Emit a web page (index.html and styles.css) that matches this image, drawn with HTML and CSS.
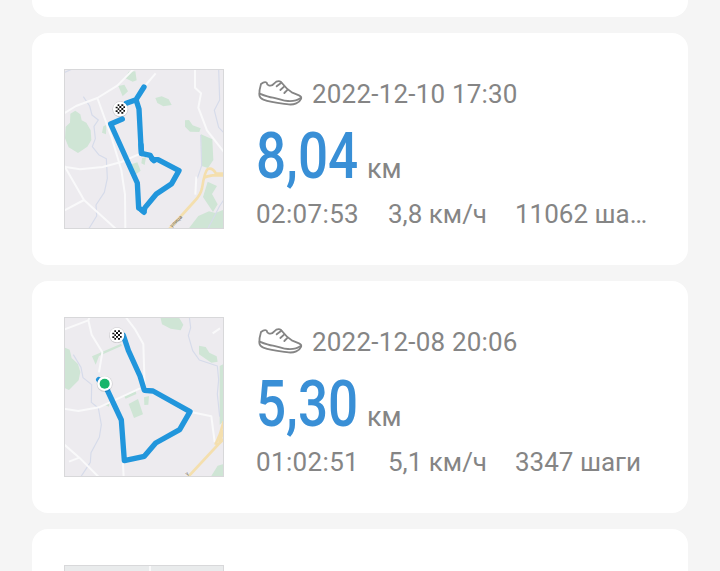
FILE: index.html
```html
<!DOCTYPE html>
<html lang="ru">
<head>
    <meta charset="UTF-8">
    <meta name="viewport" content="width=device-width, initial-scale=1.0">
    <title>Тренировки</title>
    <link rel="stylesheet" href="styles.css">
</head>
<body>
    <svg width="0" height="0" class="defs">
        <symbol id="shoe" viewBox="0 0 150 105">
            <path d="M18 24 C15 34 12 45 13 57 Q14 67 25 71 C49 80 78 82 101 85 C116 87 134 80 138 69 Q141 62 132 58 L112 50 C99 42 88 31 78 18 Q72 13 64 17 L57 23 Q51 31 41 28 Q36 27 35 20 Q29 15 18 24 Z"/>
            <path d="M14 53 C31 60 42 64 54 65 C73 68 83 75 99 75 C114 76 127 73 137 66"/>
            <path d="M79 20 L65 31 M88 31 L76 42 M98 41 L88 51"/>
        </symbol>
        <symbol id="flag" viewBox="-25 -25 50 50">
            <circle r="24" fill="#000" opacity=".13" cy="1"/>
            <circle r="22" fill="#fff"/>
            <path fill="#111" d="M-8-14h5v5h-5z M3-14h6v5h-6z M-3-9h6v6h-6z M9-8h5v5h-5z M-14-7h6v5h-6z M-8-2h5v5h-5z M3-3h6v6h-6z M-3 3h6v5h-6z M9 3h5v5h-5z M-14 4h6v5h-6z M-8 9h5v5h-5z M3 9h6v5h-6z"/>
        </symbol>
    </svg>

    <div class="list">
        <div class="card"></div>

        <div class="card">
            <svg class="map" viewBox="24 27 480 480">
                <g class="park">
                    <path d="M43 161 L58 152 L73 163 L77 181 L91 188 L104 211 L106 240 L94 260 L66 279 L38 262 L27 235 L29 200 L42 188 Z"/>
                    <path d="M218 35 L238 34 L242 61 L230 65 L207 54 Z M187 78 L205 74 L216 94 L200 109 Z"/>
                    <path d="M298 114 L317 109 L338 118 L347 135 L322 139 L304 129 Z"/>
                    <path d="M387 181 L399 180 L410 196 L434 205 L430 216 L402 215 L387 200 Z"/>
                    <path d="M435 223 L469 238 L472 300 L456 324 L437 318 Z M455 365 L483 378 L468 402 L485 433 L471 456 L441 411 Z"/>
                    <path d="M503 449 V507 H397 L427 468 L459 454 L478 459 Z"/>
                    <path d="M226 313 L244 307 L254 332 L236 346 Z M258 295 L270 291 L266 315 L256 310 Z M142 199 L151 195 L150 223 L138 218 Z"/>
                </g>
                <g class="river">
                    <path d="M82 110 L101 138 L108 165 L127 180 L114 199 L118 236 L109 260 L128 284 L151 296 L154 355 L145 397 L120 435 L122 468 L98 507 M434 224 L437 317 L424 355 M488 27 L491 120 L475 151 L488 202 L503 218 M455 507 L491 438 L503 420 M24 38 L49 27"/>
                </g>
                <g class="road">
                    <path d="M24 160 L60 138 L124 114 L184 77 L233 27 M124 114 L166 230 L196 330 L207 404 L208 507 M24 320 L72 328 L140 321 L196 306 L248 283 M24 316 L84 420 L24 452 M84 420 L180 507 M417 27 L417 83 L435 100 L427 143 L453 211 L503 275 M299 40 L264 81 M421 350 L418 404"/>
                </g>
                <g class="highway">
                    <path d="M503 341 H480 Q470 322 455 327 Q446 334 438 385 Q434 405 416 423 L340 507 M503 346 H470 Q452 348 443 354"/>
                </g>
                <text class="road-name" transform="translate(348 503) rotate(-44)">улица</text>
                <path class="track" d="M264 81 L240 119 L211 130 M199 177 L164 192 L244 369 L248 444 L264 454 L267 443 L301 402 L347 371 L369 332 L306 299 L289 298 L283 286 L256 280 L249 147 L240 119"/>
                <path class="track" d="M255 254 L257 281 M288 295 L294 302 M257 451 L264 457"/>
                <use href="#flag" x="168" y="122" width="50" height="50"/>
                <rect class="frame" x="25.5" y="28.5" width="477" height="477"/>
            </svg>
            <div class="info">
                <div class="date"><svg class="shoe"><use href="#shoe"/></svg><span>2022-12-10 17:30</span></div>
                <div class="distance"><span class="num">8,04</span><span class="unit">км</span></div>
                <div class="stats"><span class="time">02:07:53</span><span class="speed">3,8 км/ч</span><span>11062 ша…</span></div>
            </div>
        </div>

        <div class="card">
            <svg class="map" viewBox="24 27 480 480">
                <g class="park">
                    <path d="M24 118 L41 125 L47 150 L66 168 L73 192 L68 217 L39 246 L24 239 Z"/>
                    <path d="M313 27 H368 L382 50 L374 67 L344 62 L318 49 Z M429 113 L449 117 L460 134 L482 145 L485 161 L466 164 L429 139 Z"/>
                    <path d="M218 288 L246 273 L261 319 L234 330 Z M264 268 L279 264 L277 290 L265 291 Z M204 264 L239 249 L241 258 L209 272 Z M146 290 L160 284 L159 296 Z"/>
                    <path d="M108 145 L195 107 L198 113 L129 144 L119 170 Z M491 174 L503 168 V340 L491 350 Z M503 468 V507 H464 L485 473 Z"/>
                </g>
                <g class="river">
                    <path d="M52 140 L75 178 L81 209 L107 230 L106 283 L127 300 L136 350 L130 388 L105 434 L103 463 L74 507 M400 27 L404 59 L397 83 L410 128 L430 156 L484 174 L488 215 L484 258 L491 326"/>
                </g>
                <g class="road">
                    <path d="M24 65 L97 37 L107 80 L139 133 L129 193 M209 27 L238 65 L262 108 L266 236 M24 302 L67 309 L129 298 L252 241 M24 409 L70 449 L39 461 M70 449 L128 507 M200 450 L203 507 M401 311 L466 325 L476 402 M470 76 L492 61 M97 37 L101 27"/>
                </g>
                <g class="highway">
                    <path d="M396 507 L488 408 L503 394 M478 410 L492 378 L503 340 M490 405 L503 366"/>
                </g>
                <text class="road-name" transform="translate(394 503) rotate(-44)">у</text>
                <path class="track" d="M202 82 L217 127 L252 204 L265 247 L291 249 L402 311 L371 365 L299 405 L265 445 L205 458 L196 336 L151 240 L128 215"/>
                <use href="#flag" x="158" y="56" width="50" height="50"/>
                <circle cx="146" cy="228" r="24" fill="#000" opacity=".12"/>
                <circle cx="146" cy="227" r="22" fill="#fff"/>
                <circle cx="146" cy="227" r="15" fill="#18b56b"/>
                <rect class="frame" x="25.5" y="28.5" width="477" height="477"/>
            </svg>
            <div class="info">
                <div class="date"><svg class="shoe"><use href="#shoe"/></svg><span>2022-12-08 20:06</span></div>
                <div class="distance"><span class="num">5,30</span><span class="unit">км</span></div>
                <div class="stats"><span class="time">01:02:51</span><span class="speed">5,1 км/ч</span><span>3347 шаги</span></div>
            </div>
        </div>

        <div class="card">
            <svg class="map map-empty" viewBox="24 27 480 480">
                <path class="road" d="M282 27 V507"/>
                <rect class="frame" x="25.5" y="28.5" width="477" height="477"/>
            </svg>
        </div>
    </div>
</body>
</html>
```

FILE: styles.css
```css
* {
    box-sizing: border-box;
    margin: 0;
    padding: 0;
}

body {
    background: #f5f5f5;
    color: #858585;
    font-family: Roboto, "Liberation Sans", sans-serif;
    font-size: 26px;
    height: 571px;
    overflow: hidden;
}

.defs {
    position: absolute;
}

.list {
    display: flex;
    flex-direction: column;
    gap: 16px;
    height: 786px;
    overflow: hidden;
    padding: 0 32px;
    margin-top: -215px;
}

.card {
    display: flex;
    gap: 32px;
    flex-shrink: 0;
    height: 232px;
    padding: 36px 32px;
    background: #fff;
    border-radius: 16px;
}

.map {
    flex-shrink: 0;
    width: 160px;
    height: 160px;
    background: #edebef;
}

.map-empty {
    background: #e9ebec;
}

.park {
    fill: #cfe5d5;
}

.river,
.road,
.highway {
    fill: none;
    stroke-linejoin: round;
}

.river {
    stroke: #d6dbea;
    stroke-width: 3.5;
}

.road {
    stroke: #f9f9fa;
    stroke-width: 6;
}

.highway {
    stroke: #f4dfae;
    stroke-width: 8;
}

.road-name {
    font-size: 16px;
    fill: #77736a;
}

.track {
    fill: none;
    stroke: #2196dc;
    stroke-width: 16;
    stroke-linejoin: round;
    stroke-linecap: round;
}

.frame {
    fill: none;
    stroke: #d8d8da;
    stroke-width: 3;
}

.info {
    flex: 1;
    min-width: 0;
}

.date {
    display: flex;
    align-items: center;
    height: 50px;
    letter-spacing: 0.2px;
}

.shoe {
    width: 50px;
    height: 35px;
    margin: -1px 7px 0 -1px;
    fill: none;
    stroke: #858585;
    stroke-width: 5.5;
    stroke-linejoin: round;
    stroke-linecap: round;
}

.distance {
    display: flex;
    align-items: baseline;
    height: 76px;
    line-height: 74px;
}

.num {
    width: 111px;
    color: #398fd6;
    font-size: 65px;
    font-weight: 500;
    transform: scaleX(0.815);
    transform-origin: left;
}

.unit {
    font-size: 27px;
}

.stats {
    display: flex;
    line-height: 39px;
    white-space: nowrap;
}

.time {
    width: 132px;
    letter-spacing: 0.35px;
}

.speed {
    width: 127px;
}
```
